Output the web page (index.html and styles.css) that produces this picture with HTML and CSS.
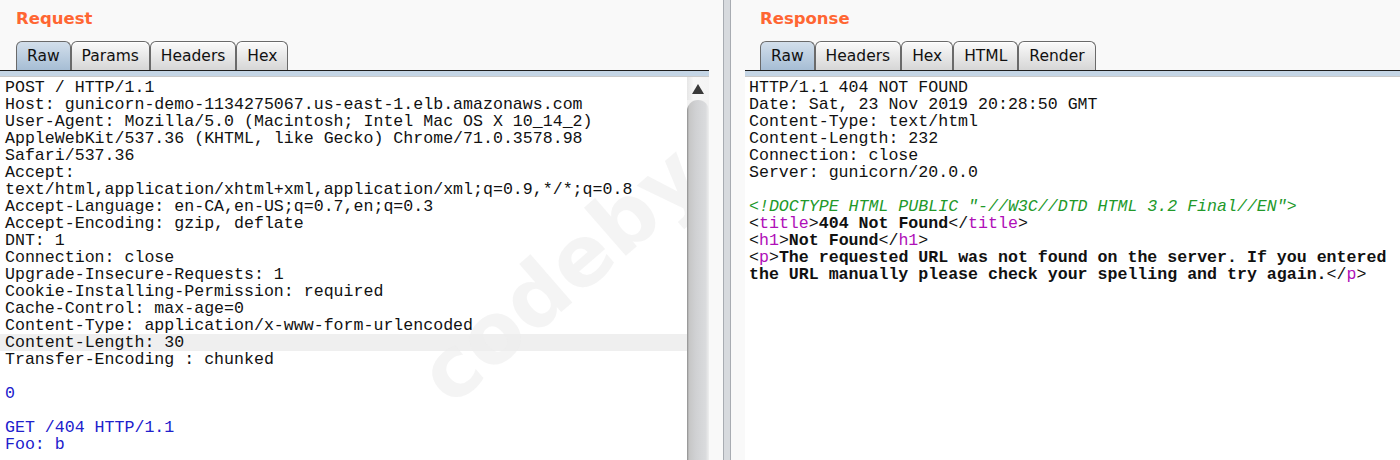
FILE: index.html
```html
<!DOCTYPE html>
<html lang="en">
    <head>
        <title>Request / Response</title>
        <meta charset="utf-8" />
        <link rel="stylesheet" href="styles.css">
    </head>

    <body>
        <div class="split">
            <div class="pane leftPane">
                <div class="paneTitle">Request</div>
                <div class="tabs">
                    <div class="tab active">Raw</div>
                    <div class="tab">Params</div>
                    <div class="tab">Headers</div>
                    <div class="tab">Hex</div>
                </div>
                <div class="rule"></div>
                <div class="editor">
<pre class="code">POST / HTTP/1.1
Host: gunicorn-demo-1134275067.us-east-1.elb.amazonaws.com
User-Agent: Mozilla/5.0 (Macintosh; Intel Mac OS X 10_14_2)
AppleWebKit/537.36 (KHTML, like Gecko) Chrome/71.0.3578.98
Safari/537.36
Accept:
text/html,application/xhtml+xml,application/xml;q=0.9,*/*;q=0.8
Accept-Language: en-CA,en-US;q=0.7,en;q=0.3
Accept-Encoding: gzip, deflate
DNT: 1
Connection: close
Upgrade-Insecure-Requests: 1
Cookie-Installing-Permission: required
Cache-Control: max-age=0
Content-Type: application/x-www-form-urlencoded
<span class="hl">Content-Length: 30</span>
Transfer-Encoding : chunked

<span class="body">0</span>

<span class="body">GET /404 HTTP/1.1</span>
<span class="body">Foo: b</span><span class="watermark">codeby.net</span></pre>
                    <div class="scrollbar">
                        <div class="arrowBox">
                            <svg width="12" height="10" viewBox="0 0 12 10"><polygon points="6,0 12,10 0,10" fill="#3a3a3a"/></svg>
                        </div>
                        <div class="thumb"></div>
                    </div>
                </div>
            </div>

            <div class="gutter"><div class="divider"></div></div>

            <div class="pane rightPane">
                <div class="paneTitle">Response</div>
                <div class="tabs">
                    <div class="tab active">Raw</div>
                    <div class="tab">Headers</div>
                    <div class="tab">Hex</div>
                    <div class="tab">HTML</div>
                    <div class="tab">Render</div>
                </div>
                <div class="rule"></div>
                <div class="editor">
<pre class="code">HTTP/1.1 404 NOT FOUND
Date: Sat, 23 Nov 2019 20:28:50 GMT
Content-Type: text/html
Content-Length: 232
Connection: close
Server: gunicorn/20.0.0

<span class="doctype">&lt;!DOCTYPE HTML PUBLIC "-//W3C//DTD HTML 3.2 Final//EN"&gt;</span>
&lt;<span class="tag">title</span>&gt;<b>404 Not Found</b>&lt;/<span class="tag">title</span>&gt;
&lt;<span class="tag">h1</span>&gt;<b>Not Found</b>&lt;/<span class="tag">h1</span>&gt;
&lt;<span class="tag">p</span>&gt;<b>The requested URL was not found on the server. If you entered
the URL manually please check your spelling and try again.</b>&lt;/<span class="tag">p</span>&gt;</pre>
                </div>
            </div>
        </div>
    </body>
</html>
```

FILE: styles.css
```css
html, body {
    margin: 0;
    padding: 0;
}

body {
    background-color: #f9f9f9;
    width: 1400px;
    height: 460px;
    overflow: hidden;
    font-family: "DejaVu Sans", Verdana, sans-serif;
}

.split {
    display: flex;
    height: 460px;
}

.pane {
    display: flex;
    flex-direction: column;
    height: 460px;
}

.leftPane {
    width: 709px;
}

.rightPane {
    flex: 1;
}

.paneTitle {
    color: #ff6633;
    font-weight: bold;
    font-size: 16.5px;
    line-height: 20px;
    padding: 9px 0 0 16px;
    height: 33px;
    box-sizing: border-box;
}

.rightPane .paneTitle {
    padding-left: 15px;
}

.tabs {
    display: flex;
    height: 29px;
    padding-left: 16px;
    margin-top: 8px;
}

.rightPane .tabs {
    padding-left: 15px;
}

.tab {
    font-size: 15.5px;
    color: #111;
    line-height: 29px;
    padding: 0 10px;
    border: 1px solid #6a6a6a;
    border-bottom: none;
    border-radius: 6px 6px 0 0;
    background: linear-gradient(#fbfbfb, #e8e8e8 50%, #d6d6d6);
    box-shadow: inset 0 1px 0 #ffffff;
}

.tab.active {
    background: linear-gradient(#d3dfeb, #bccee0 50%, #a6bdd4);
    box-shadow: none;
}

.rule {
    border-top: 1px solid #1e1e1e;
    height: 5px;
    background-color: #c4d5e5;
    border-bottom: 1px solid #c9c9c9;
}

.editor {
    flex: 1;
    display: flex;
    background-color: #ffffff;
    min-height: 0;
}

.code {
    flex: 1;
    position: relative;
    margin: 0;
    padding: 2px 0 0 5px;
    font-family: "Liberation Mono", "Courier New", monospace;
    font-size: 16.6px;
    line-height: 17px;
    color: #111;
    white-space: pre;
    overflow: hidden;
}

.rightPane .code {
    padding-left: 4px;
}

.hl {
    display: inline-block;
    width: 100%;
    margin-left: -5px;
    padding-left: 5px;
    background-color: #efefef;
}

.body {
    color: #2020cc;
}

.doctype {
    color: #22992a;
    font-style: italic;
}

.tag {
    color: #b010b8;
}

.code b {
    color: #111;
}

.scrollbar {
    width: 22px;
    display: flex;
    flex-direction: column;
    background-color: #f2f2f2;
}

.arrowBox {
    height: 23px;
    display: flex;
    justify-content: center;
    align-items: center;
    background: linear-gradient(to right, #e6e6e6, #f7f7f7 30%, #f4f4f4);
}

.thumb {
    flex: 1;
    border-radius: 12px 12px 0 0;
    background: linear-gradient(to right, #8c8c8c, #c6c6c6 2px, #d0d1d3 40%, #dadbdd 85%, #efefef);
}

.gutter {
    width: 36px;
    display: flex;
    justify-content: center;
}

.divider {
    width: 6px;
    height: 100%;
    background-color: #d7dade;
    border-left: 1px solid #a8acb2;
    border-right: 1px solid #a8acb2;
}

/* faint site watermark over the request text */
.watermark {
    position: absolute;
    left: 432px;
    top: 266px;
    font-family: "DejaVu Sans", sans-serif;
    font-weight: bold;
    font-size: 84px;
    line-height: 86px;
    color: rgba(236, 236, 236, 0.6);
    transform: rotate(-41deg);
    transform-origin: left center;
    pointer-events: none;
}
```
